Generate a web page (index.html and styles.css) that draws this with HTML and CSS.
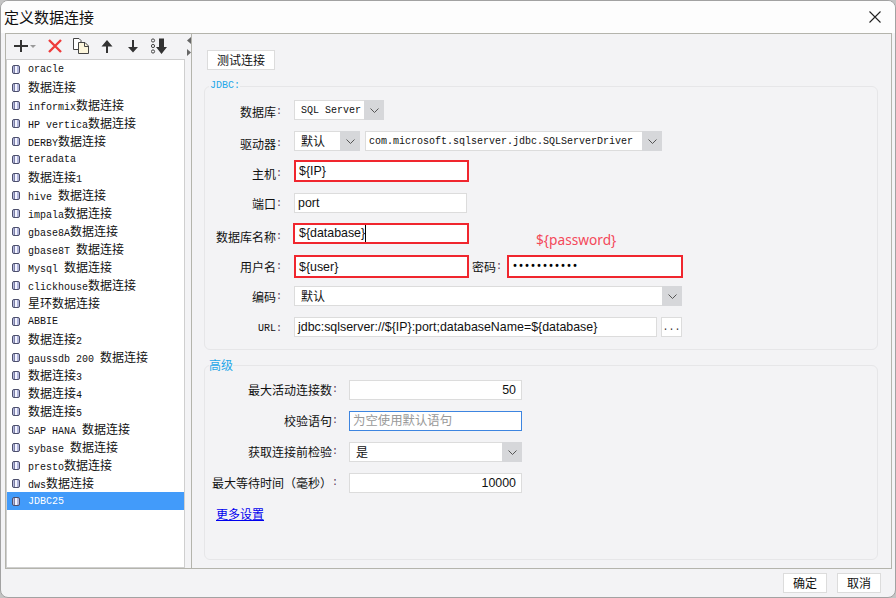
FILE: index.html
```html
<!DOCTYPE html>
<html lang="zh">
<head>
<meta charset="utf-8">
<title>定义数据连接</title>
<link rel="stylesheet" href="styles.css">
</head>
<body>
<svg class="defs" width="0" height="0">
  <defs>
    <symbol id="db" viewBox="0 0 8 9">
      <rect x="0.5" y="0.5" width="7" height="8" rx="1.5" fill="#b4b8de" stroke="#4c4f6c"/>
      <rect x="3" y="1" width="2" height="7" fill="#f4f5ff"/>
      <rect x="2" y="1" width="1" height="7" fill="#7c7fa6"/>
    </symbol>
    <symbol id="chev" viewBox="0 0 9 5">
      <path d="M0.5 0.5 L4.5 4.5 L8.5 0.5" fill="none" stroke="#555" stroke-width="1"/>
    </symbol>
  </defs>
</svg>
<div class="window">
  <header class="titlebar">
    <span class="title">定义数据连接</span>
    <svg class="close" width="12" height="12" viewBox="0 0 12 12"><path d="M0.5 0.5 L11.5 11.5 M11.5 0.5 L0.5 11.5" stroke="#222" stroke-width="1.1" fill="none"/></svg>
  </header>
  <div class="frame">
    <aside class="side">
      <div class="toolbar">
        <svg width="23" height="16" viewBox="0 0 23 16"><path d="M7 2 V14 M0 8 H14" stroke="#333" stroke-width="2" fill="none"/><path d="M16 7 H22 L19 10 Z" fill="#999"/></svg>
        <svg width="16" height="16" viewBox="0 0 16 16"><path d="M2 2 L14 14 M14 2 L2 14" stroke="#ee3b3b" stroke-width="2.4" fill="none"/></svg>
        <svg width="16" height="16" viewBox="0 0 16 16"><path d="M0.5 0.5 H6 L8 2.5 V11.5 H0.5 Z" fill="#fff" stroke="#444"/><path d="M5.5 4.5 H12 L15.5 8 V15.5 H5.5 Z" fill="#fdf6dc" stroke="#444"/><path d="M11.5 4.5 V8.5 H15.5" fill="none" stroke="#444"/></svg>
        <svg width="16" height="16" viewBox="0 0 16 16"><path d="M8 2 L13.5 8.5 H9 V15 H7 V8.5 H2.5 Z" fill="#333"/></svg>
        <svg width="16" height="16" viewBox="0 0 16 16"><path d="M7 2 H9 V9 H13 L8 14.5 L3 9 H7 Z" fill="#333"/></svg>
        <svg width="16" height="16" viewBox="0 0 16 16"><circle cx="2" cy="2.5" r="1.6" fill="none" stroke="#444"/><circle cx="2" cy="8" r="1.6" fill="none" stroke="#444"/><circle cx="2" cy="13.5" r="1.6" fill="none" stroke="#444"/><path d="M8 0.5 H13 V9 H16 L10.5 16 L5 9 H8 Z" fill="#333"/></svg>
      </div>
      <ul class="list">
        <li class="item"><svg class="db"><use href="#db"/></svg><span class="mono">oracle</span></li>
        <li class="item"><svg class="db"><use href="#db"/></svg><span class="zh">数据连接</span></li>
        <li class="item"><svg class="db"><use href="#db"/></svg><span class="mono">informix</span><span class="zh">数据连接</span></li>
        <li class="item"><svg class="db"><use href="#db"/></svg><span class="mono">HP vertica</span><span class="zh">数据连接</span></li>
        <li class="item"><svg class="db"><use href="#db"/></svg><span class="mono">DERBY</span><span class="zh">数据连接</span></li>
        <li class="item"><svg class="db"><use href="#db"/></svg><span class="mono">teradata</span></li>
        <li class="item"><svg class="db"><use href="#db"/></svg><span class="zh">数据连接</span><span class="mono">1</span></li>
        <li class="item"><svg class="db"><use href="#db"/></svg><span class="mono">hive </span><span class="zh">数据连接</span></li>
        <li class="item"><svg class="db"><use href="#db"/></svg><span class="mono">impala</span><span class="zh">数据连接</span></li>
        <li class="item"><svg class="db"><use href="#db"/></svg><span class="mono">gbase8A</span><span class="zh">数据连接</span></li>
        <li class="item"><svg class="db"><use href="#db"/></svg><span class="mono">gbase8T </span><span class="zh">数据连接</span></li>
        <li class="item"><svg class="db"><use href="#db"/></svg><span class="mono">Mysql </span><span class="zh">数据连接</span></li>
        <li class="item"><svg class="db"><use href="#db"/></svg><span class="mono">clickhouse</span><span class="zh">数据连接</span></li>
        <li class="item"><svg class="db"><use href="#db"/></svg><span class="zh">星环数据连接</span></li>
        <li class="item"><svg class="db"><use href="#db"/></svg><span class="mono">ABBIE</span></li>
        <li class="item"><svg class="db"><use href="#db"/></svg><span class="zh">数据连接</span><span class="mono">2</span></li>
        <li class="item"><svg class="db"><use href="#db"/></svg><span class="mono">gaussdb 200 </span><span class="zh">数据连接</span></li>
        <li class="item"><svg class="db"><use href="#db"/></svg><span class="zh">数据连接</span><span class="mono">3</span></li>
        <li class="item"><svg class="db"><use href="#db"/></svg><span class="zh">数据连接</span><span class="mono">4</span></li>
        <li class="item"><svg class="db"><use href="#db"/></svg><span class="zh">数据连接</span><span class="mono">5</span></li>
        <li class="item"><svg class="db"><use href="#db"/></svg><span class="mono">SAP HANA </span><span class="zh">数据连接</span></li>
        <li class="item"><svg class="db"><use href="#db"/></svg><span class="mono">sybase </span><span class="zh">数据连接</span></li>
        <li class="item"><svg class="db"><use href="#db"/></svg><span class="mono">presto</span><span class="zh">数据连接</span></li>
        <li class="item"><svg class="db"><use href="#db"/></svg><span class="mono">dws</span><span class="zh">数据连接</span></li>
        <li class="item selected"><svg class="db"><use href="#db"/></svg><span class="mono">JDBC25</span></li>
      </ul>
    </aside>
    <div class="splitter">
      <svg width="4" height="7" viewBox="0 0 4 7"><path d="M4 0 V7 L0 3.5 Z" fill="#666"/></svg>
      <svg width="4" height="7" viewBox="0 0 4 7"><path d="M0 0 V7 L4 3.5 Z" fill="#666"/></svg>
    </div>
    <main class="content">
      <button class="btn btn-test" type="button">测试连接</button>
      <fieldset class="group group-jdbc">
        <legend class="legend mono">JDBC:</legend>
        <div class="row">
          <label class="label drop-2"><span class="zh">数据库</span><span class="colon">:</span></label>
          <div class="field select w-90"><span class="val mono">SQL Server</span><span class="arrow"><svg class="chev"><use href="#chev"/></svg></span></div>
        </div>
        <div class="row gap-11">
          <label class="label drop-3"><span class="zh">驱动器</span><span class="colon">:</span></label>
          <div class="field select w-66"><span class="val zh">默认</span><span class="arrow"><svg class="chev"><use href="#chev"/></svg></span></div>
          <div class="field select w-297 after-5"><span class="val val-tight mono">com.microsoft.sqlserver.jdbc.SQLServerDriver</span><span class="arrow"><svg class="chev"><use href="#chev"/></svg></span></div>
        </div>
        <div class="row gap-9 h-22">
          <label class="label drop-3"><span class="zh">主机</span><span class="colon">:</span></label>
          <div class="field red w-175">${IP}</div>
        </div>
        <div class="row gap-11">
          <label class="label drop-1"><span class="zh">端口</span><span class="colon">:</span></label>
          <div class="field w-173">port</div>
        </div>
        <div class="row gap-10 h-21">
          <label class="label drop-3"><span class="zh">数据库名称</span><span class="colon">:</span></label>
          <div class="field red red-wide"><span class="caret">${database}</span></div>
        </div>
        <div class="row gap-11 h-23">
          <label class="label"><span class="zh">用户名</span><span class="colon">:</span></label>
          <div class="field red w-175">${user}</div>
          <label class="label-inline"><span class="zh">密码</span><span class="colon">:</span></label>
          <div class="field red w-176 pwd-wrap"><span class="mono dots">•••••••••••</span><span class="note">${password}</span></div>
        </div>
        <div class="row gap-8">
          <label class="label drop-1"><span class="zh">编码</span><span class="colon">:</span></label>
          <div class="field select w-388"><span class="val zh">默认</span><span class="arrow"><svg class="chev"><use href="#chev"/></svg></span></div>
        </div>
        <div class="row gap-11">
          <label class="label drop-2"><span class="mono">URL</span><span class="colon">:</span></label>
          <div class="field w-363">jdbc:sqlserver://${IP}:port;databaseName=${database}</div>
          <button class="btn btn-dots mono" type="button">...</button>
        </div>
      </fieldset>
      <fieldset class="group group-adv">
        <legend class="legend zh">高级</legend>
        <div class="row">
          <label class="label label-adv"><span class="zh">最大活动连接数</span><span class="colon">:</span></label>
          <div class="field w-173 num">50</div>
        </div>
        <div class="row gap-11">
          <label class="label label-adv"><span class="zh">校验语句</span><span class="colon">:</span></label>
          <div class="field w-173 focus zh">为空使用默认语句</div>
        </div>
        <div class="row gap-11">
          <label class="label label-adv"><span class="zh">获取连接前检验</span><span class="colon">:</span></label>
          <div class="field select w-173"><span class="val zh">是</span><span class="arrow"><svg class="chev"><use href="#chev"/></svg></span></div>
        </div>
        <div class="row gap-11">
          <label class="label label-adv"><span class="zh">最大等待时间（毫秒）</span><span class="colon">:</span></label>
          <div class="field w-173 num">10000</div>
        </div>
        <a class="more zh" href="#">更多设置</a>
      </fieldset>
    </main>
  </div>
  <footer class="footer">
    <button class="btn btn-foot" type="button">确定</button>
    <button class="btn btn-foot" type="button">取消</button>
  </footer>
</div>
</body>
</html>
```
FILE: styles.css
```css
* { box-sizing: border-box; }
html, body { margin: 0; padding: 0; }
body {
  width: 896px;
  height: 598px;
  background: #c4c4c4;
  overflow: hidden;
  font-family: "Liberation Sans", "Noto Sans CJK SC", sans-serif;
  font-size: 12px;
  color: #111;
}
.defs { position: absolute; }
.zh { font-family: "Noto Sans CJK SC", sans-serif; font-size: 12px; }
.mono { font-family: "Liberation Mono", "Noto Sans CJK SC", monospace; font-size: 10px; white-space: pre; }

.window {
  width: 896px;
  height: 598px;
  display: flex;
  flex-direction: column;
  background: #f3f3f5;
  border: 1px solid #a2a2a2;
  border-radius: 8px;
  overflow: hidden;
}
.titlebar {
  height: 32px;
  flex: none;
  display: flex;
  align-items: center;
  justify-content: space-between;
  padding: 0 14px 0 3px;
  background: #fdfdfd;
}
.title { font-family: "Noto Sans CJK SC", sans-serif; font-size: 15px; line-height: 20px; }

.frame {
  flex: none;
  height: 536px;
  margin: 0 3px 0 4px;
  display: flex;
  border: 1px solid #b4b4ac;
}
.side { width: 179px; flex: none; display: flex; flex-direction: column; }
.toolbar {
  height: 25px;
  flex: none;
  display: flex;
  align-items: center;
  gap: 10px;
  padding: 0 0 1px 8px;
}
.list {
  flex: 1;
  margin: 0;
  padding: 0;
  list-style: none;
  background: #fff;
  border: 1px solid #cfcfcf;
}
.item {
  height: 18px;
  display: flex;
  align-items: baseline;
  padding-left: 5px;
  white-space: pre;
  line-height: 18px;
}
.item .mono { line-height: 18px; }
.item .mono:only-of-type { padding-top: 1px; }
.item.selected { background: #429bfa; color: #fff; }
.db { width: 8px; height: 9px; margin-right: 8px; flex: none; align-self: center; }

.splitter {
  width: 7px;
  flex: none;
  display: flex;
  flex-direction: column;
  gap: 5px;
  padding: 3px 0 0 2px;
  border-right: 1px solid #b4b4ac;
}
.content {
  flex: 1;
  min-width: 0;
  display: flex;
  flex-direction: column;
  align-items: flex-start;
  padding: 16px 12px 8px 12px;
}
.btn {
  background: #fff;
  border: 1px solid #dcdcdc;
  border-radius: 0;
  padding: 0;
  margin: 0;
  font-family: "Noto Sans CJK SC", sans-serif;
  font-size: 12px;
  color: #111;
}
.btn-test { width: 68px; height: 20px; margin-left: 3px; line-height: 16px; flex: none; }
.btn-foot { width: 44px; height: 20px; line-height: 16px; }
.btn-dots { width: 21px; height: 20px; margin-left: 4px; color: #333; font-family: "Liberation Mono", monospace; font-size: 10px; }

.group {
  width: 674px;
  margin: 9px 0 0;
  padding: 7px 0 12px;
  border: 1px solid #e6e6e8;
  border-radius: 6px;
  min-width: 0;
  flex: none;
}
.group-adv { margin-top: 8px; padding-top: 8px; flex: 1; }
.legend {
  margin-left: 4px;
  padding: 0;
  height: 14px;
  line-height: 14px;
  color: #1ea7e8;
}
.legend.mono { font-size: 10px; padding-left: 1px; }

.row { display: flex; align-items: center; height: 20px; }
.gap-8 { margin-top: 8px; }
.gap-9 { margin-top: 9px; }
.gap-10 { margin-top: 10px; }
.gap-11 { margin-top: 11px; }
.h-21 { height: 21px; }
.h-22 { height: 22px; }
.h-23 { height: 23px; }

.label {
  width: 77px;
  margin-right: 12px;
  flex: none;
  display: flex;
  justify-content: flex-end;
  align-items: center;
  line-height: 16px;
}
.drop-1 { padding-top: 2px; }
.drop-2 { padding-top: 4px; }
.drop-3 { padding-top: 6px; }
.label-adv { width: 133px; margin-right: 11px; }
.label-inline { display: flex; align-items: center; width: 38px; flex: none; padding-left: 3px; line-height: 16px; }
.colon { width: 6px; font-family: "Liberation Mono", monospace; font-size: 10px; text-align: center; color: #553355; }

.field {
  height: 100%;
  flex: none;
  display: flex;
  align-items: center;
  background: #fff;
  border: 1px solid #dcdcdc;
  padding: 0 3px;
  font-family: "Liberation Sans", "Noto Sans CJK SC", sans-serif;
  font-size: 12.4px;
  line-height: 16px;
  white-space: pre;
}
.select { padding: 0; }
.val { flex: 1; padding-left: 6px; min-width: 0; }
.val.mono { padding-top: 2px; }
.val-tight { padding-left: 3px; }
.arrow {
  width: 20px;
  height: 20px;
  margin: -1px -1px -1px 0;
  flex: none;
  background: #d6d7da;
  display: flex;
  align-items: center;
  justify-content: center;
}
.chev { width: 9px; height: 5px; }

.w-66 { width: 66px; }
.w-90 { width: 90px; }
.w-173 { width: 173px; }
.w-175 { width: 175px; }
.w-176 { width: 176px; }
.w-297 { width: 297px; }
.w-363 { width: 363px; }
.w-388 { width: 388px; }
.after-5 { margin-left: 5px; }

.red { border: 2px solid #f0262e; padding: 0 3px; }
.red-wide { width: 176px; margin-left: -1px; padding-left: 4px; }
.caret { border-right: 1px solid #000; height: 17px; line-height: 17px; }
.num { justify-content: flex-end; padding-right: 5px; }
.focus { border-color: #3d85e0; color: #999; }
.pwd-wrap { position: relative; }
.dots { color: #000; font-weight: 700; }
.note {
  position: absolute;
  left: 27px;
  top: -27px;
  font-family: "Noto Sans", sans-serif;
  font-size: 13.7px;
  line-height: 20px;
  color: #f4495a;
}
.more {
  display: block;
  width: 48px;
  margin: 13px 0 0 11px;
  line-height: 16px;
  color: #0000ee;
  text-decoration: underline;
}
.footer {
  flex: 1;
  display: flex;
  justify-content: flex-end;
  gap: 10px;
  padding: 4px 14px 0 0;
}
```
